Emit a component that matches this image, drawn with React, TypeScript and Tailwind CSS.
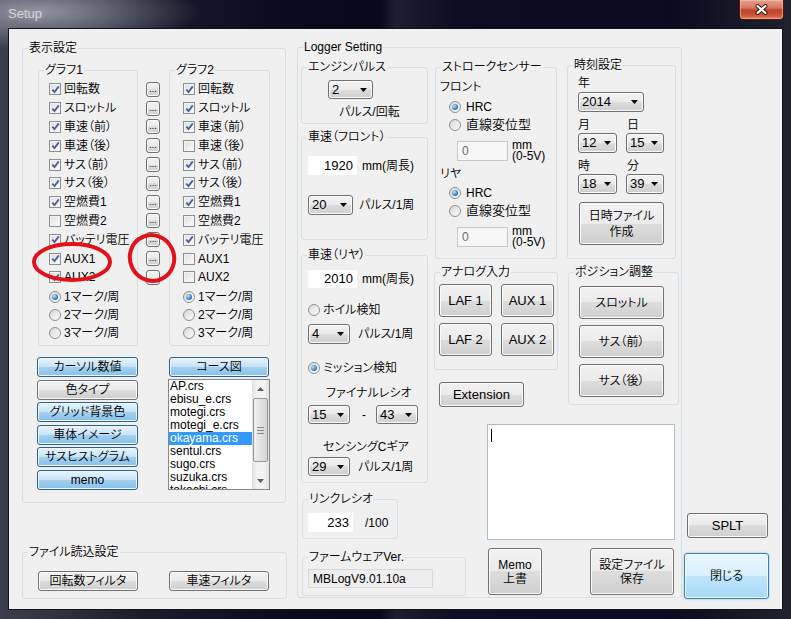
import type { ReactNode } from 'react'

const FACE =
  'rounded-[3px] border border-[#707070] bg-[linear-gradient(#f2f2f2,#ebebeb_50%,#dddddd_50%,#cfcfcf)] shadow-[inset_0_0_0_1px_#fbfbfb]'
const BUTTON = `flex shrink-0 flex-col items-center justify-center text-center leading-[14px] ${FACE}`
const BLUE_BUTTON =
  'flex shrink-0 items-center justify-center rounded-[3px] border border-[#2c628b] bg-[linear-gradient(#e6f3fc,#c8e4f7_48%,#a3cfef_52%,#88c1e9)] shadow-[inset_0_0_0_1px_#eef7fd] leading-[14px]'

const GRAPH1: [string, boolean][] = [
  ['回転数', true],
  ['スロットル', true],
  ['車速（前）', true],
  ['車速（後）', true],
  ['サス（前）', true],
  ['サス（後）', true],
  ['空燃費1', true],
  ['空燃費2', false],
  ['バッテリ電圧', true],
  ['AUX1', true],
  ['AUX2', true],
]

const GRAPH2: [string, boolean][] = [
  ['回転数', true],
  ['スロットル', true],
  ['車速（前）', true],
  ['車速（後）', false],
  ['サス（前）', true],
  ['サス（後）', true],
  ['空燃費1', true],
  ['空燃費2', false],
  ['バッテリ電圧', true],
  ['AUX1', false],
  ['AUX2', false],
]

const COURSES = [
  'AP.crs',
  'ebisu_e.crs',
  'motegi.crs',
  'motegi_e.crs',
  'okayama.crs',
  'sentul.crs',
  'sugo.crs',
  'suzuka.crs',
  'tokachi.crs',
]

function Group({ label, className, children }: { label: string; className: string; children?: ReactNode }) {
  return (
    <div className={`relative shrink-0 rounded-[3px] border border-[#d5dfe5] ${className}`}>
      <span className="absolute left-[5px] top-[-8px] whitespace-nowrap bg-[#f0f0f0] px-[1px] leading-[14px]">
        {label}
      </span>
      {children}
    </div>
  )
}

function Check({ on }: { on: boolean }) {
  return (
    <span className="flex h-[12px] w-[12px] shrink-0 items-center justify-center border border-[#8e8f8f] bg-[linear-gradient(135deg,#dedede,#fdfdfd)] shadow-[inset_0_0_0_1px_#f3f3f3]">
      {on && (
        <svg width="9" height="9" viewBox="0 0 9 9">
          <path d="M1.3 4.6 3.5 7 7.8 1.4" fill="none" stroke="#4b5e9a" strokeWidth="1.8" />
        </svg>
      )}
    </span>
  )
}

function Radio({ on }: { on: boolean }) {
  return (
    <span className="flex h-[12px] w-[12px] shrink-0 items-center justify-center rounded-full border border-[#8e8f8f] bg-[linear-gradient(135deg,#d8d8d8,#fcfcfc)]">
      {on && (
        <span className="h-[6px] w-[6px] rounded-full bg-[radial-gradient(circle_at_35%_35%,#bfe6fc,#2f80c6_60%,#1a4c86)]" />
      )}
    </span>
  )
}

function Combo({ value, className }: { value: string; className: string }) {
  return (
    <div className={`flex shrink-0 items-center justify-between pl-[3px] pr-[5px] text-[13px] ${FACE} ${className}`}>
      <span className="leading-[14px]">{value}</span>
      <svg width="7" height="4" viewBox="0 0 7 4">
        <path d="M0 0H7L3.5 4Z" fill="#000" />
      </svg>
    </div>
  )
}

function Field({ value, className }: { value: string; className: string }) {
  return (
    <div className={`flex shrink-0 items-center justify-end bg-white pr-[4px] text-[13px] leading-[14px] ${className}`}>
      {value}
    </div>
  )
}

function GraphGroup({ label, items, className }: { label: string; items: [string, boolean][]; className: string }) {
  return (
    <Group label={label} className={`h-[276px] ${className}`}>
      <div className="flex flex-col pt-[9px]">
        {items.map(([name, on]) => (
          <div key={name} className="flex h-[18.8px] items-center gap-[3px]">
            <Check on={on} />
            <span className="whitespace-nowrap leading-[14px]">{name}</span>
          </div>
        ))}
        <div className="mt-[1px] flex flex-col">
          {['1マーク/周', '2マーク/周', '3マーク/周'].map((m, i) => (
            <div key={m} className="flex h-[18px] items-center gap-[3px]">
              <Radio on={i === 0} />
              <span className="whitespace-nowrap leading-[14px]">{m}</span>
            </div>
          ))}
        </div>
      </div>
    </Group>
  )
}

function StrokeBlock({ label, first }: { label: string; first: boolean }) {
  return (
    <>
      <span className={`leading-[14px] ${first ? '' : 'mt-[5px]'}`}>{label}</span>
      <div className={`ml-[9px] flex h-[18px] items-center gap-[5px] ${first ? 'mt-[4px]' : 'mt-[3px]'}`}>
        <Radio on />
        <span className="leading-[14px]">HRC</span>
      </div>
      <div className="ml-[9px] flex h-[18px] items-center gap-[5px]">
        <Radio on={false} />
        <span className="text-[13px] leading-[14px]">直線変位型</span>
      </div>
      <div className="ml-[17px] mt-[6px] flex items-center">
        <div className="flex h-[20px] w-[51px] items-center border border-[#c8c8c8] bg-[#f6f6f6] pl-[4px] leading-[14px] text-[#6d6d6d]">
          0
        </div>
        <div className="ml-[4px] flex flex-col">
          <span className="leading-[11px]">mm</span>
          <span className="leading-[11px]">(0-5V)</span>
        </div>
      </div>
    </>
  )
}

export default function App() {
  return (
    <div className="relative h-[619px] w-[791px] overflow-hidden bg-[radial-gradient(160px_38px_at_40px_12px,rgba(160,164,176,0.85),rgba(160,164,176,0)),linear-gradient(90deg,#3c3f4b,#1b1d2d_18%,#0a0b1d_35%,#08091a_48%,#1c1f30_50%,#0c0d20_58%,#0a0b1e_85%,#20222e)] font-['Liberation_Sans','Noto_Sans_CJK_JP',sans-serif] text-[12px] font-[350] text-black [font-feature-settings:'palt']">
      {/* title bar */}
      <div className="flex h-[28px] items-start justify-between">
        <span className="ml-[8px] mt-[7px] text-[13px] leading-[14px] text-[#d6d6d6] [text-shadow:0_0_5px_#9ea2ad]">
          Setup
        </span>
        <div className="mr-[7px] flex h-[20px] w-[45px] items-center justify-center rounded-b-[4px] border border-t-0 border-[#4a160c] bg-[linear-gradient(#e6a090,#d57660_42%,#c0432a_52%,#c8553a_80%,#e08468)] shadow-[inset_0_0_0_1px_rgba(255,200,190,0.5)]">
          <svg width="13" height="11" viewBox="0 0 13 11">
            <path d="M2.5 2 10.5 9M10.5 2 2.5 9" stroke="#3a0e06" strokeWidth="4" strokeLinecap="round" />
            <path d="M2.5 2 10.5 9M10.5 2 2.5 9" stroke="#fff" strokeWidth="2.2" strokeLinecap="round" />
          </svg>
        </div>
      </div>

      {/* client area */}
      <div className="ml-[8px] h-[582px] w-[775px] border border-[#10131c] bg-[#f0f0f0]">
        <div className="flex h-[580px] items-start">
          {/* left column */}
          <div className="ml-[13px] mt-[19px] flex w-[265px] shrink-0 flex-col">
            <Group label="表示設定" className="h-[455px] w-[264px]">
              <div className="flex items-start">
                <div className="ml-[14px] flex w-[101px] shrink-0 flex-col">
                  <div className="ml-[1px] mt-[21px]">
                    <GraphGroup label="グラフ1" items={GRAPH1} className="w-[100px] pl-[10px]" />
                  </div>
                  <div className="mt-[11px] flex flex-col">
                    <div className={`${BLUE_BUTTON} h-[20px] w-[101px]`}>カーソル数値</div>
                    <div className={`${BUTTON} mt-[3px] h-[20px] w-[101px]`}>色タイプ</div>
                    <div className={`${BLUE_BUTTON} mt-[2px] h-[20px] w-[101px]`}>グリッド背景色</div>
                    <div className={`${BLUE_BUTTON} mt-[3px] h-[20px] w-[101px]`}>車体イメージ</div>
                    <div className={`${BLUE_BUTTON} mt-[2px] h-[20px] w-[101px]`}>サスヒストグラム</div>
                    <div className={`${BLUE_BUTTON} mt-[3px] h-[20px] w-[101px]`}>memo</div>
                  </div>
                </div>

                <div className="ml-[8px] mt-[31px] flex w-[14px] shrink-0 flex-col">
                  {GRAPH1.map(([name]) => (
                    <div key={name} className="flex h-[18.8px] items-center">
                      <div className={`flex h-[15px] w-[14px] items-end justify-center ${FACE}`}>
                        <span className="mb-[2px] text-[9px] leading-[9px]">...</span>
                      </div>
                    </div>
                  ))}
                </div>

                <div className="ml-[8px] flex w-[102px] shrink-0 flex-col">
                  <div className="ml-[1px] mt-[21px]">
                    <GraphGroup label="グラフ2" items={GRAPH2} className="w-[101px] pl-[13px]" />
                  </div>
                  <div className={`${BLUE_BUTTON} ml-[1px] mt-[11px] h-[20px] w-[100px]`}>コース図</div>
                  <div className="mt-[2px] flex h-[111px] w-[102px] border border-[#828790] bg-white">
                    <div className="flex-1 overflow-hidden">
                      {COURSES.map((c) => (
                        <div
                          key={c}
                          className={`h-[13px] pl-[1px] leading-[13px] ${c === 'okayama.crs' ? 'bg-[#3399ff] text-white' : ''}`}
                        >
                          {c}
                        </div>
                      ))}
                    </div>
                    <div className="flex w-[17px] flex-col items-center bg-[linear-gradient(90deg,#e2e2e2,#f3f3f3_30%,#f3f3f3_70%,#e2e2e2)]">
                      <div className="flex h-[17px] items-center">
                        <svg width="7" height="4" viewBox="0 0 7 4">
                          <path d="M0 4H7L3.5 0Z" fill="#5f5f5f" />
                        </svg>
                      </div>
                      <div className="mt-[1px] flex h-[64px] w-[15px] flex-col items-center justify-center gap-[2px] rounded-[2px] border border-[#979797] bg-[linear-gradient(90deg,#f1f1f1,#e2e2e2_50%,#d6d6d6)]">
                        <span className="h-px w-[7px] bg-[#8a8a8a]" />
                        <span className="h-px w-[7px] bg-[#8a8a8a]" />
                        <span className="h-px w-[7px] bg-[#8a8a8a]" />
                      </div>
                      <div className="flex-1" />
                      <div className="flex h-[17px] items-center">
                        <svg width="7" height="4" viewBox="0 0 7 4">
                          <path d="M0 0H7L3.5 4Z" fill="#5f5f5f" />
                        </svg>
                      </div>
                    </div>
                  </div>
                </div>
              </div>
            </Group>

            <Group label="ファイル読込設定" className="mt-[49px] h-[47px] w-[265px]">
              <div className="flex pl-[15px] pt-[18px]">
                <div className={`${BUTTON} h-[20px] w-[100px]`}>回転数フィルタ</div>
                <div className={`${BUTTON} ml-[31px] h-[20px] w-[100px]`}>車速フィルタ</div>
              </div>
            </Group>
          </div>

          {/* Logger Setting */}
          <Group label="Logger Setting" className="ml-[10px] mt-[18px] h-[551px] w-[385px]">
            <div className="flex items-start">
              <div className="ml-[3px] flex w-[127px] shrink-0 flex-col">
                <Group label="エンジンパルス" className="mt-[19px] h-[57px] w-[127px]">
                  <div className="flex flex-col items-start pl-[26px] pt-[12px]">
                    <Combo value="2" className="h-[19px] w-[45px]" />
                    <span className="ml-[11px] mt-[6px] leading-[14px]">パルス/回転</span>
                  </div>
                </Group>

                <Group label="車速（フロント）" className="mt-[13px] h-[103px] w-[127px]">
                  <div className="flex flex-col items-start pl-[6px] pt-[18px]">
                    <div className="flex items-center">
                      <Field value="1920" className="h-[19px] w-[49px]" />
                      <span className="ml-[5px] leading-[14px]">mm(周長)</span>
                    </div>
                    <div className="mt-[20px] flex items-center">
                      <Combo value="20" className="h-[20px] w-[45px]" />
                      <span className="ml-[6px] leading-[14px]">パルス/1周</span>
                    </div>
                  </div>
                </Group>

                <Group label="車速（リヤ）" className="mt-[15px] h-[228px] w-[127px]">
                  <div className="flex flex-col items-start pl-[6px] pt-[14px]">
                    <div className="flex items-center">
                      <Field value="2010" className="h-[18px] w-[49px]" />
                      <span className="ml-[5px] leading-[14px]">mm(周長)</span>
                    </div>
                    <div className="mt-[15px] flex h-[14px] items-center gap-[3px]">
                      <Radio on={false} />
                      <span className="leading-[14px]">ホイル検知</span>
                    </div>
                    <div className="mt-[7px] flex items-center">
                      <Combo value="4" className="h-[20px] w-[42px]" />
                      <span className="ml-[8px] leading-[14px]">パルス/1周</span>
                    </div>
                    <div className="mt-[17px] flex h-[14px] items-center gap-[3px]">
                      <Radio on />
                      <span className="leading-[14px]">ミッション検知</span>
                    </div>
                    <span className="ml-[18px] mt-[11px] leading-[14px]">ファイナルレシオ</span>
                    <div className="mt-[5px] flex items-center">
                      <Combo value="15" className="h-[19px] w-[42px]" />
                      <span className="ml-[12px] leading-[14px]">-</span>
                      <Combo value="43" className="ml-[10px] h-[19px] w-[42px]" />
                    </div>
                    <span className="ml-[15px] mt-[16px] leading-[14px]">センシングCギア</span>
                    <div className="mt-[3px] flex items-center">
                      <Combo value="29" className="h-[19px] w-[42px]" />
                      <span className="ml-[8px] leading-[14px]">パルス/1周</span>
                    </div>
                  </div>
                </Group>

                <Group label="リンクレシオ" className="ml-[1px] mt-[16px] h-[40px] w-[96px]">
                  <div className="flex items-center pl-[5px] pt-[13px]">
                    <Field value="233" className="h-[19px] w-[45px]" />
                    <span className="ml-[12px] leading-[14px]">/100</span>
                  </div>
                </Group>

                <Group label="ファームウェアVer." className="ml-[1px] mt-[18px] h-[39px] w-[164px]">
                  <div className="pl-[5px] pt-[11px]">
                    <div className="flex h-[19px] w-[125px] items-center border border-[#d9d9d9] bg-[#eeeeee] pl-[4px] leading-[14px]">
                      MBLogV9.01.10a
                    </div>
                  </div>
                </Group>
              </div>

              <div className="ml-[6px] flex flex-col">
                <div className="flex items-start">
                  <Group label="ストロークセンサー" className="ml-[1px] mt-[19px] h-[192px] w-[122px]">
                    <div className="flex flex-col items-start pl-[4px] pt-[12px]">
                      <StrokeBlock label="フロント" first />
                      <StrokeBlock label="リヤ" first={false} />
                    </div>
                  </Group>

                  <Group label="時刻設定" className="ml-[10px] mt-[17px] h-[194px] w-[109px]">
                    <div className="flex flex-col items-start pl-[10px] pt-[10px]">
                      <span className="leading-[14px]">年</span>
                      <Combo value="2014" className="mt-[2px] h-[20px] w-[66px]" />
                      <div className="mt-[6px] flex leading-[14px]">
                        <span className="w-[49px]">月</span>
                        <span>日</span>
                      </div>
                      <div className="mt-[1px] flex gap-[9px]">
                        <Combo value="12" className="h-[20px] w-[39px]" />
                        <Combo value="15" className="h-[20px] w-[38px]" />
                      </div>
                      <div className="mt-[6px] flex leading-[14px]">
                        <span className="w-[49px]">時</span>
                        <span>分</span>
                      </div>
                      <div className="mt-[1px] flex gap-[9px]">
                        <Combo value="18" className="h-[20px] w-[39px]" />
                        <Combo value="39" className="h-[20px] w-[38px]" />
                      </div>
                      <div className={`${BUTTON} ml-[1px] mt-[8px] h-[43px] w-[85px]`}>
                        <span className="leading-[16px]">日時ファイル</span>
                        <span className="leading-[16px]">作成</span>
                      </div>
                    </div>
                  </Group>
                </div>

                <div className="mt-[13px] flex items-start">
                  <div className="flex flex-col items-start">
                    <Group label="アナログ入力" className="h-[98px] w-[124px]">
                      <div className="grid grid-cols-[53px_53px] gap-x-[9px] gap-y-[6px] pl-[4px] pt-[11px]">
                        {['LAF 1', 'AUX 1', 'LAF 2', 'AUX 2'].map((b) => (
                          <div key={b} className={`${BUTTON} h-[33px] text-[13px]`}>
                            {b}
                          </div>
                        ))}
                      </div>
                    </Group>
                    <div className={`${BUTTON} ml-[5px] mt-[12px] h-[25px] w-[85px] text-[13px]`}>Extension</div>
                  </div>

                  <Group label="ポジション調整" className="ml-[10px] h-[133px] w-[111px]">
                    <div className="flex flex-col gap-[6px] pl-[10px] pt-[13px]">
                      {['スロットル', 'サス（前）', 'サス（後）'].map((b) => (
                        <div key={b} className={`${BUTTON} h-[33px] w-[85px]`}>
                          {b}
                        </div>
                      ))}
                    </div>
                  </Group>
                </div>

                <div className="ml-[53px] mt-[17px] h-[116px] w-[188px] border border-[#abbccb] bg-white pl-[3px] pt-[4px]">
                  <div className="h-[13px] w-px bg-black" />
                </div>

                <div className="mt-[8px] flex">
                  <div className={`${BUTTON} ml-[54px] h-[47px] w-[54px]`}>
                    <span>Memo</span>
                    <span>上書</span>
                  </div>
                  <div className={`${BUTTON} ml-[48px] h-[47px] w-[84px]`}>
                    <span>設定ファイル</span>
                    <span>保存</span>
                  </div>
                </div>
              </div>
            </div>
          </Group>

          {/* right buttons */}
          <div className="ml-[2px] flex h-full w-[85px] shrink-0 flex-col items-start justify-end pb-[10px]">
            <div className={`${BUTTON} ml-[3px] h-[25px] w-[81px] text-[13px]`}>SPLT</div>
            <div className="mt-[15px] flex h-[46px] w-[85px] items-center justify-center rounded-[3px] border border-[#3c7fb1] bg-[linear-gradient(#eaf6fd,#d9f0fc_50%,#bee6fd_50%,#a7d9f5)] leading-[14px] shadow-[0_0_2px_#6cb8e8,inset_0_0_0_1px_#f2fafe]">
              閉じる
            </div>
          </div>
        </div>
      </div>

      {/* red annotation marks */}
      <svg className="pointer-events-none absolute left-0 top-0" width="791" height="619" viewBox="0 0 791 619">
        <ellipse cx="72" cy="262" rx="38" ry="18" fill="none" stroke="#e2121b" strokeWidth="4" />
        <ellipse cx="152" cy="258" rx="22" ry="23" fill="none" stroke="#e2121b" strokeWidth="4" transform="rotate(-25 152 258)" />
      </svg>
    </div>
  )
}
